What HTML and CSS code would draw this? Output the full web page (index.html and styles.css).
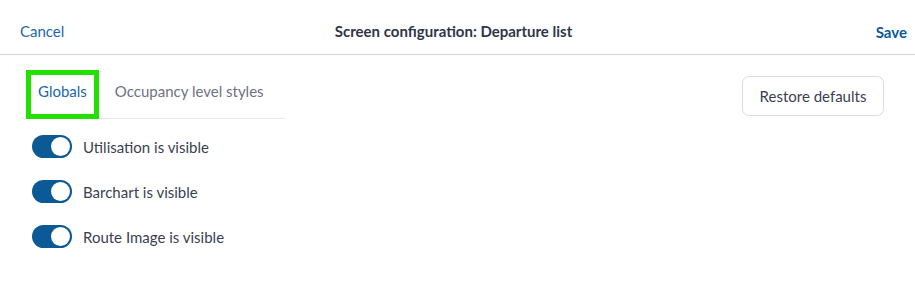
FILE: index.html
```html
<!DOCTYPE html>
<html lang="en">
<head>
<meta charset="utf-8">
<title>Screen configuration</title>
<link rel="stylesheet" href="styles.css">
</head>
<body>
<div class="page">
  <header class="topbar">
    <a class="link cancel" href="#">Cancel</a>
    <h1 class="title">Screen configuration: Departure list</h1>
    <a class="link save" href="#">Save</a>
  </header>
  <main class="content">
    <div class="left">
      <nav class="tabs">
        <button class="tab active">Globals</button>
        <button class="tab">Occupancy level styles</button>
      </nav>
      <ul class="options">
        <li class="option"><span class="toggle on"><span class="knob"></span></span><span class="label">Utilisation is visible</span></li>
        <li class="option"><span class="toggle on"><span class="knob"></span></span><span class="label">Barchart is visible</span></li>
        <li class="option"><span class="toggle on"><span class="knob"></span></span><span class="label">Route Image is visible</span></li>
      </ul>
    </div>
    <div class="right">
      <button class="restore">Restore defaults</button>
    </div>
  </main>
</div>
</body>
</html>
```
FILE: styles.css
```css
* { box-sizing: border-box; }
html, body { margin: 0; padding: 0; background: #fff; }
body { font-family: Lato, "Open Sans", sans-serif; color: #3a3f52; }

.topbar {
  height: 55px;
  display: grid;
  grid-template-columns: 1fr auto 1fr;
  align-items: center;
  padding: 8px 8px 0 0;
  border-bottom: 1px solid #d6d6de;
}
.link { text-decoration: none; font-size: 15px; }
.cancel { color: #1b68a8; margin-left: 20px; justify-self: start; margin-top: -1px; }
.save { color: #0b5a96; font-weight: 700; justify-self: end; margin-top: 2px; }
.title {
  margin: 0;
  font-size: 15px;
  font-weight: 700;
  color: #2f3547;
}

.content {
  display: flex;
  justify-content: space-between;
  padding: 15px 31px 0 26px;
}
.tabs {
  display: flex;
  align-items: flex-start;
  width: 259px;
  height: 49px;
  border-bottom: 1px solid #e8e8ee;
}
.tab {
  font: inherit;
  font-size: 15px;
  background: none;
  border: none;
  color: #6d7383;
  cursor: pointer;
}
.tab.active {
  color: #1b68a8;
  border: 5px solid #22e000;
  height: 49px;
  padding: 0 7px 8px;
  flex: none;
}
.tabs .tab:nth-child(2) { height: 41px; padding: 0 16px; }

.options { list-style: none; margin: 16px 0 0 6px; padding: 0; }
.option {
  display: flex;
  align-items: center;
  height: 23px;
  margin-bottom: 22px;
}
.toggle {
  width: 40px;
  height: 23px;
  border-radius: 12px;
  background: #0b5a96;
  display: flex;
  align-items: center;
  justify-content: flex-end;
  padding: 0 2px;
  margin-right: 11px;
}
.knob {
  width: 19px;
  height: 19px;
  border-radius: 50%;
  background: #fff;
}
.label { font-size: 15px; color: #3a3f52; }

.right { padding-top: 6px; }
.restore {
  font: inherit;
  font-size: 15px;
  color: #3a3f52;
  background: #fff;
  border: 1px solid #d8dce4;
  border-radius: 7px;
  width: 142px;
  height: 40px;
  cursor: pointer;
}
```
